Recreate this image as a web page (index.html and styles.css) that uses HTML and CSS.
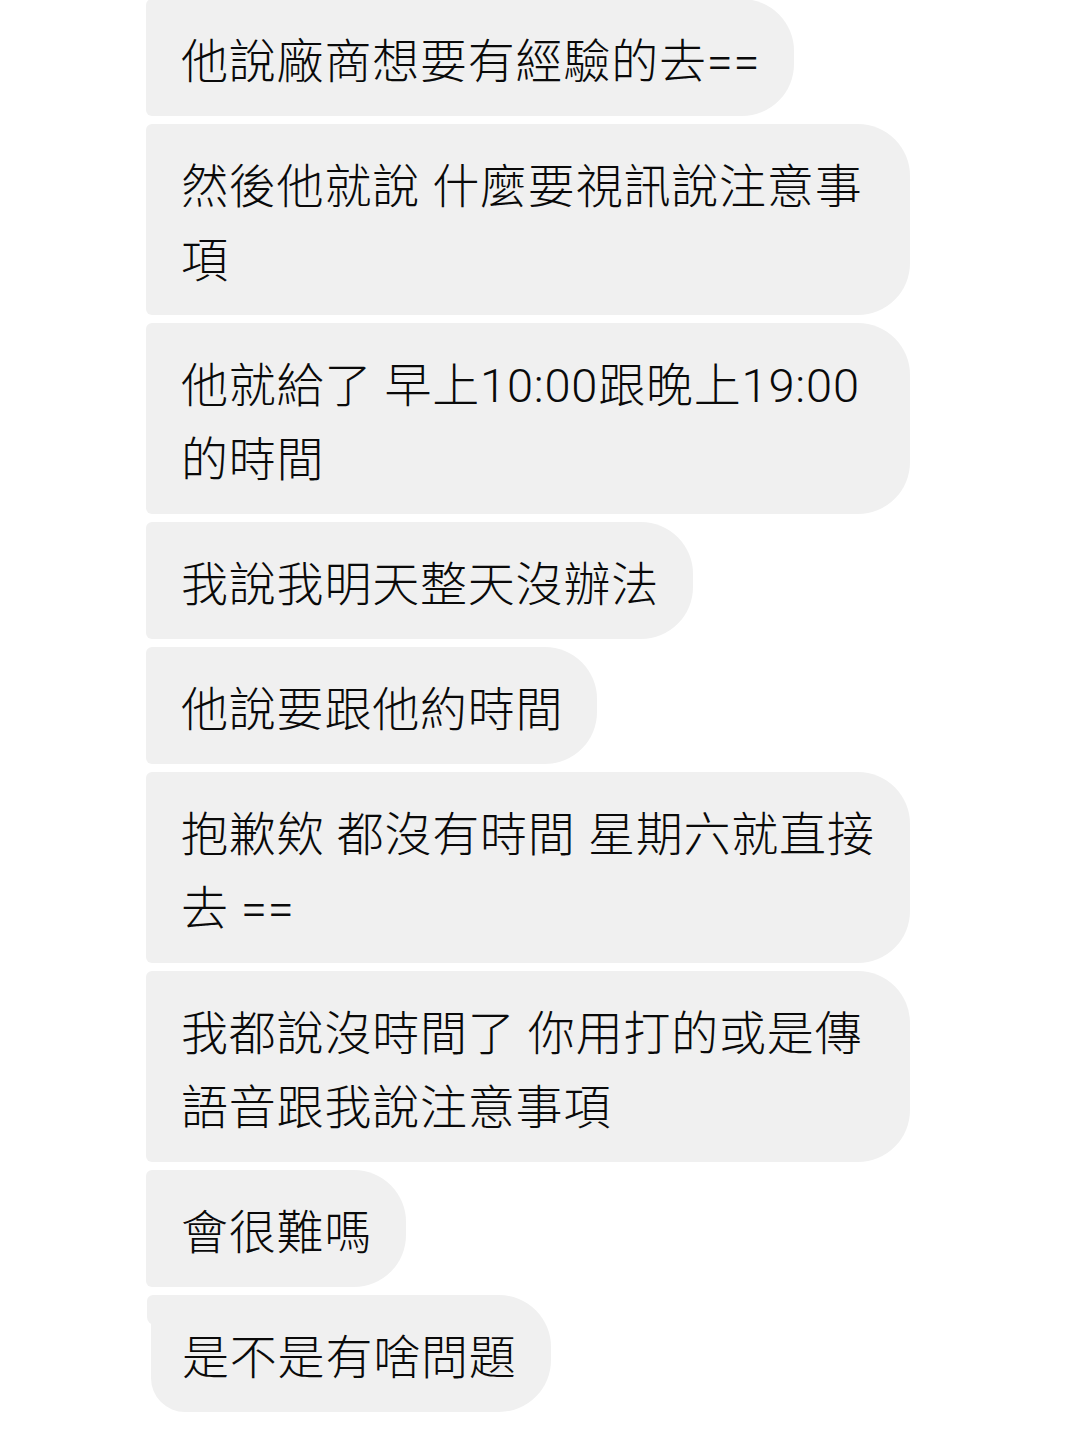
FILE: index.html
```html
<!DOCTYPE html>
<html lang="zh-Hant">
<head>
<meta charset="utf-8">
<link rel="stylesheet" href="styles.css">
</head>
<body>
<div class="chat">
  <div class="bubble first">他說廠商想要有經驗的去==</div>
  <div class="bubble">然後他就說 什麼要視訊說注意事項</div>
  <div class="bubble">他就給了 早上10:00跟晚上19:00的時間</div>
  <div class="bubble">我說我明天整天沒辦法</div>
  <div class="bubble">他說要跟他約時間</div>
  <div class="bubble">抱歉欸 都沒有時間 星期六就直接去 ==</div>
  <div class="bubble">我都說沒時間了 你用打的或是傳語音跟我說注意事項</div>
  <div class="bubble">會很難嗎</div>
  <div class="bubble last">是不是有啥問題</div>
</div>
</body>
</html>
```

FILE: styles.css
```css
html, body {
  margin: 0;
  padding: 0;
  background: #ffffff;
}
body {
  width: 1078px;
  height: 1437px;
  overflow: hidden;
  font-family: Roboto, "Noto Sans CJK TC", "Noto Sans", sans-serif;
}
.chat {
  display: flex;
  flex-direction: column;
  align-items: flex-start;
  gap: 8px;
  padding-left: 146px;
}
.bubble {
  position: relative;
  box-sizing: border-box;
  max-width: 764px;
  background: #f0f0f0;
  color: #0a0a0a;
  font-size: 47px;
  font-weight: 300;
  letter-spacing: 0.8px;
  line-height: 74px;
  padding: 26px 34px 17px 35px;
  border-radius: 6px 52px 52px 6px;
}
.first {
  margin-top: -1px;
}
.last {
  margin-left: 5px;
  padding-left: 31px;
  border-radius: 6px 52px 52px 34px;
}
.last::before {
  content: "";
  position: absolute;
  left: -4px;
  top: 0;
  width: 10px;
  height: 30px;
  background: #f0f0f0;
  border-radius: 6px 0 0 8px;
}
```
